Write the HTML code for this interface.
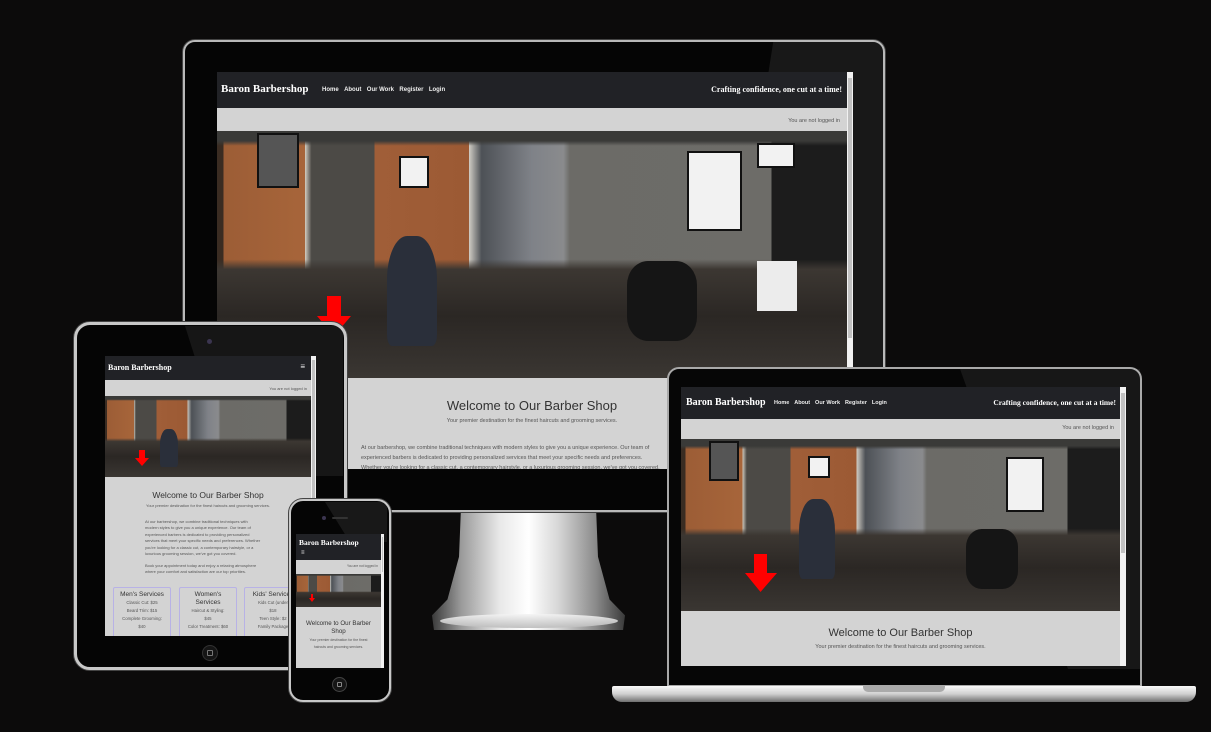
<!DOCTYPE html>
<html><head><meta charset="utf-8"><style>
*{margin:0;padding:0;box-sizing:border-box}
body{width:1211px;height:732px;background:#0c0b0b;position:relative;overflow:hidden;font-family:"Liberation Sans",sans-serif}
.abs{position:absolute}
.frame{position:absolute;background:#050505;border:2px solid #b9b9b9;box-shadow:0 0 0 1px #444}
.scr{position:absolute;background:#d3d3d3;overflow:hidden}
.nav{background:#212226;color:#fff;position:absolute;left:0;right:0;top:0}
.ttl{font-family:"Liberation Serif",serif;font-weight:bold;position:absolute;color:#fff;white-space:nowrap}
.lnk{position:absolute;color:#eee;font-weight:bold;white-space:nowrap}
.lnk span{margin-right:0.9em}
.photo{position:absolute;left:0;right:0;overflow:hidden;
background:
linear-gradient(to bottom,rgba(0,0,0,0) 52%,#3c3732 56%,#2b2724 75%,#3a3632 100%),
linear-gradient(to bottom,#3a3a38 0,#3a3a38 4%,rgba(0,0,0,0) 6%),
linear-gradient(to right,#3a2c22 0,#3a2c22 1%,#9c5d36 1%,#a7653a 14%,#cfc9bd 14%,#4c4a46 15%,#4c4a46 25%,#a05e38 25%,#9c5a34 40%,#d0ccc4 40%,#4d5156 42%,#7f8288 50%,#8a8b8d 55%,#6c6b67 56%,#6d6c68 88%,#1c1c1c 88%)}
.photo .man{position:absolute;background:#2a2f3a;border-radius:40% 40% 10% 10%}
.photo .frm{position:absolute;background:#f2f2f2;border:2px solid #111}
.arrow{position:absolute}
.sb{position:absolute;right:0;top:0;bottom:0;background:#f1f1f1}
.sb i{position:absolute;left:1px;right:1px;background:#c1c1c1}
.txt{position:absolute;color:#555;white-space:nowrap}
.card{position:absolute;border:1px solid #b8b2e6;border-radius:2px;text-align:center;color:#555}
</style></head><body>

<!-- MONITOR -->
<div class="abs" style="left:432px;top:508px;width:193px;height:122px;background:linear-gradient(to right,#3a3a3a,#9a9a9a 15%,#e8e8e8 35%,#fff 50%,#d8d8d8 65%,#8a8a8a 85%,#3a3a3a);clip-path:polygon(15% 0,85% 0,86% 40%,92% 75%,100% 88%,99% 100%,1% 100%,0 88%,8% 75%,14% 40%)"></div>
<div class="abs" style="left:440px;top:614px;width:178px;height:14px;background:linear-gradient(#f4f4f4,#bbb);border-radius:50%;opacity:.9"></div>
<div class="frame" style="left:183px;top:40px;width:702px;height:472px;border-radius:12px"></div>
<div class="abs" style="left:700px;top:42px;width:183px;height:468px;background:rgba(255,255,255,.08);clip-path:polygon(40% 0,100% 0,100% 100%,0 100%);border-radius:0 10px 10px 0"></div>
<div class="scr" style="left:217px;top:72px;width:636px;height:397px">
 <div class="nav" style="height:36px;right:6px">
  <div class="ttl" style="left:4px;top:11px;font-size:11px">Baron Barbershop</div>
  <div class="lnk" style="left:105px;top:15px;font-size:6px"><span>Home</span><span>About</span><span>Our Work</span><span>Register</span><span>Login</span></div>
  <div class="ttl" style="right:5px;top:13px;font-size:8px">Crafting confidence, one cut at a time!</div>
 </div>
 <div class="txt" style="right:13px;top:46px;font-size:5.5px">You are not logged in</div>
 <div class="photo" style="top:59px;height:247px;right:6px">
  <div class="frm" style="left:40px;top:2px;width:42px;height:55px;background:#555"></div>
  <div class="frm" style="left:182px;top:25px;width:30px;height:32px"></div>
  <div class="frm" style="left:470px;top:20px;width:55px;height:80px"></div>
  <div class="frm" style="left:540px;top:12px;width:38px;height:25px"></div>
  <div class="man" style="left:170px;top:105px;width:50px;height:110px"></div>
  <div class="abs" style="left:410px;top:130px;width:70px;height:80px;background:#151515;border-radius:30%"></div>
  <div class="abs" style="left:540px;top:130px;width:40px;height:50px;background:#ececec"></div>
  <svg class="arrow" style="left:100px;top:165px" width="36" height="40"><path d="M10 0h14v20h10L17 40 0 20h10z" fill="#f00"/></svg>
 </div>
 <div class="txt" style="left:0;right:6px;top:326px;text-align:center;font-size:13px;color:#333">Welcome to Our Barber Shop</div>
 <div class="txt" style="left:0;right:6px;top:346px;text-align:center;font-size:5.5px">Your premier destination for the finest haircuts and grooming services.</div>
 <div class="txt" style="left:144px;top:371px;font-size:5.5px;line-height:10px">At our barbershop, we combine traditional techniques with modern styles to give you a unique experience. Our team of<br>experienced barbers is dedicated to providing personalized services that meet your specific needs and preferences.<br>Whether you're looking for a classic cut, a contemporary hairstyle, or a luxurious grooming session, we've got you covered.</div>
 <div class="sb" style="width:6px"><i style="top:6px;height:260px"></i></div>
</div>

<!-- TABLET -->
<div class="frame" style="left:74px;top:322px;width:273px;height:348px;border-radius:16px;border-width:3px;border-color:#c8c8c8"></div>
<div class="abs" style="left:185px;top:326px;width:158px;height:150px;background:rgba(255,255,255,.07);clip-path:polygon(0 0,100% 0,100% 100%,30% 100%)"></div>
<div class="abs" style="left:207px;top:339px;width:5px;height:5px;border-radius:50%;background:#3b3550"></div>
<div class="abs" style="left:202px;top:645px;width:16px;height:16px;border-radius:50%;background:#151515;border:1px solid #333"></div>
<div class="abs" style="left:207px;top:650px;width:6px;height:6px;border:1px solid #777;border-radius:1px"></div>
<div class="scr" style="left:105px;top:356px;width:211px;height:280px">
 <div class="nav" style="height:24px;right:5px">
  <div class="ttl" style="left:3px;top:7px;font-size:8px">Baron Barbershop</div>
  <div class="lnk" style="right:6px;top:6px;font-size:8px">≡</div>
 </div>
 <div class="txt" style="right:9px;top:30px;font-size:4px">You are not logged in</div>
 <div class="photo" style="top:40px;height:81px;right:5px">
  <div class="man" style="left:55px;top:33px;width:18px;height:38px"></div>
  <svg class="arrow" style="left:30px;top:54px" width="14" height="16"><path d="M4 0h6v8h4L7 16 0 8h4z" fill="#f00"/></svg>
 </div>
 <div class="txt" style="left:0;right:5px;top:134px;text-align:center;font-size:8.5px;color:#333">Welcome to Our Barber Shop</div>
 <div class="txt" style="left:0;right:5px;top:147px;text-align:center;font-size:4px">Your premier destination for the finest haircuts and grooming services.</div>
 <div class="txt" style="left:40px;top:163px;font-size:4px;line-height:6.4px">At our barbershop, we combine traditional techniques with<br>modern styles to give you a unique experience. Our team of<br>experienced barbers is dedicated to providing personalized<br>services that meet your specific needs and preferences. Whether<br>you're looking for a classic cut, a contemporary hairstyle, or a<br>luxurious grooming session, we've got you covered.</div>
 <div class="txt" style="left:40px;top:207px;font-size:4px;line-height:6.4px">Book your appointment today and enjoy a relaxing atmosphere<br>where your comfort and satisfaction are our top priorities.</div>
 <div class="card" style="left:8px;top:231px;width:58px;height:60px;font-size:4.3px;line-height:8px"><div style="font-size:6.5px;margin-top:3px;color:#333">Men's Services</div>Classic Cut: $25<br>Beard Trim: $15<br>Complete Grooming:<br>$40</div>
 <div class="card" style="left:74px;top:231px;width:58px;height:60px;font-size:4.3px;line-height:8px"><div style="font-size:6.5px;margin-top:3px;line-height:8px;color:#333">Women's<br>Services</div>Haircut &amp; Styling:<br>$45<br>Color Treatment: $60</div>
 <div class="card" style="left:139px;top:231px;width:58px;height:60px;font-size:4.3px;line-height:8px;overflow:hidden"><div style="font-size:6.5px;margin-top:3px;color:#333;white-space:nowrap">Kids' Services</div>Kids Cut (under<br>$18<br>Teen Style: $2<br>Family Package</div>
 <div class="sb" style="width:5px"><i style="top:4px;height:200px"></i></div>
</div>

<!-- PHONE -->
<div class="frame" style="left:289px;top:499px;width:102px;height:203px;border-radius:14px;border-width:2px;border-color:#c8c8c8"></div>
<div class="abs" style="left:325px;top:502px;width:62px;height:40px;background:rgba(255,255,255,.08);clip-path:polygon(0 0,100% 0,100% 100%,40% 100%)"></div>
<div class="abs" style="left:322px;top:516px;width:4px;height:4px;border-radius:50%;background:#3b3550"></div>
<div class="abs" style="left:332px;top:517px;width:16px;height:2px;border-radius:1px;background:#333"></div>
<div class="abs" style="left:332px;top:677px;width:15px;height:15px;border-radius:50%;background:#151515;border:1px solid #444"></div>
<div class="abs" style="left:337px;top:682px;width:5px;height:5px;border:1px solid #888;border-radius:1px"></div>
<div class="scr" style="left:296px;top:534px;width:88px;height:134px">
 <div class="nav" style="height:26px;right:3px">
  <div class="ttl" style="left:3px;top:4px;font-size:7.5px">Baron Barbershop</div>
  <div class="lnk" style="left:5px;top:16px;font-size:6px">≡</div>
 </div>
 <div class="txt" style="right:6px;top:30px;font-size:3.3px">You are not logged in</div>
 <div class="photo" style="top:40px;height:33px;right:3px">
  <svg class="arrow" style="left:13px;top:20px" width="6" height="8"><path d="M2 0h2v4h2L3 8 0 4h2z" fill="#f00"/></svg>
 </div>
 <div class="txt" style="left:0;right:3px;top:86px;text-align:center;font-size:6.2px;line-height:8px;color:#333;white-space:normal">Welcome to Our Barber<br>Shop</div>
 <div class="txt" style="left:0;right:3px;top:103px;text-align:center;font-size:3.5px;line-height:7px">Your premier destination for the finest<br>haircuts and grooming services.</div>
 <div class="sb" style="width:3px"><i style="top:3px;height:35px"></i></div>
</div>

<!-- LAPTOP -->
<div class="abs" style="left:667px;top:367px;width:475px;height:320px;background:#060606;border:2px solid #a9a9a9;border-radius:12px 12px 0 0"></div>
<div class="abs" style="left:960px;top:369px;width:180px;height:300px;background:rgba(255,255,255,.07);clip-path:polygon(0 0,100% 0,100% 100%,60% 100%)"></div>
<div class="abs" style="left:612px;top:686px;width:584px;height:16px;border-radius:2px 2px 10px 10px;background:linear-gradient(to bottom,#fafafa,#cfcfcf 50%,#6f6f6f)"></div>
<div class="abs" style="left:863px;top:686px;width:82px;height:6px;border-radius:0 0 5px 5px;background:#aaa"></div>
<div class="scr" style="left:681px;top:387px;width:445px;height:279px">
 <div class="nav" style="height:32px;right:6px">
  <div class="ttl" style="left:5px;top:10px;font-size:10px">Baron Barbershop</div>
  <div class="lnk" style="left:93px;top:13px;font-size:5.5px"><span>Home</span><span>About</span><span>Our Work</span><span>Register</span><span>Login</span></div>
  <div class="ttl" style="right:4px;top:11px;font-size:7.5px">Crafting confidence, one cut at a time!</div>
 </div>
 <div class="txt" style="right:12px;top:38px;font-size:5.5px">You are not logged in</div>
 <div class="photo" style="top:52px;height:172px;right:6px">
  <div class="frm" style="left:28px;top:2px;width:30px;height:40px;background:#555"></div>
  <div class="frm" style="left:127px;top:17px;width:22px;height:22px"></div>
  <div class="frm" style="left:325px;top:18px;width:38px;height:55px"></div>
  <div class="man" style="left:118px;top:60px;width:36px;height:80px"></div>
  <div class="abs" style="left:285px;top:90px;width:52px;height:60px;background:#151515;border-radius:30%"></div>
  <svg class="arrow" style="left:64px;top:115px" width="32" height="38"><path d="M9 0h13v19h10L15.5 38 0 19h9z" fill="#f00"/></svg>
 </div>
 <div class="txt" style="left:0;right:6px;top:240px;text-align:center;font-size:11px;color:#333">Welcome to Our Barber Shop</div>
 <div class="txt" style="left:0;right:6px;top:257px;text-align:center;font-size:5.5px">Your premier destination for the finest haircuts and grooming services.</div>
 <div class="sb" style="width:6px"><i style="top:6px;height:160px"></i></div>
</div>
</body></html>
